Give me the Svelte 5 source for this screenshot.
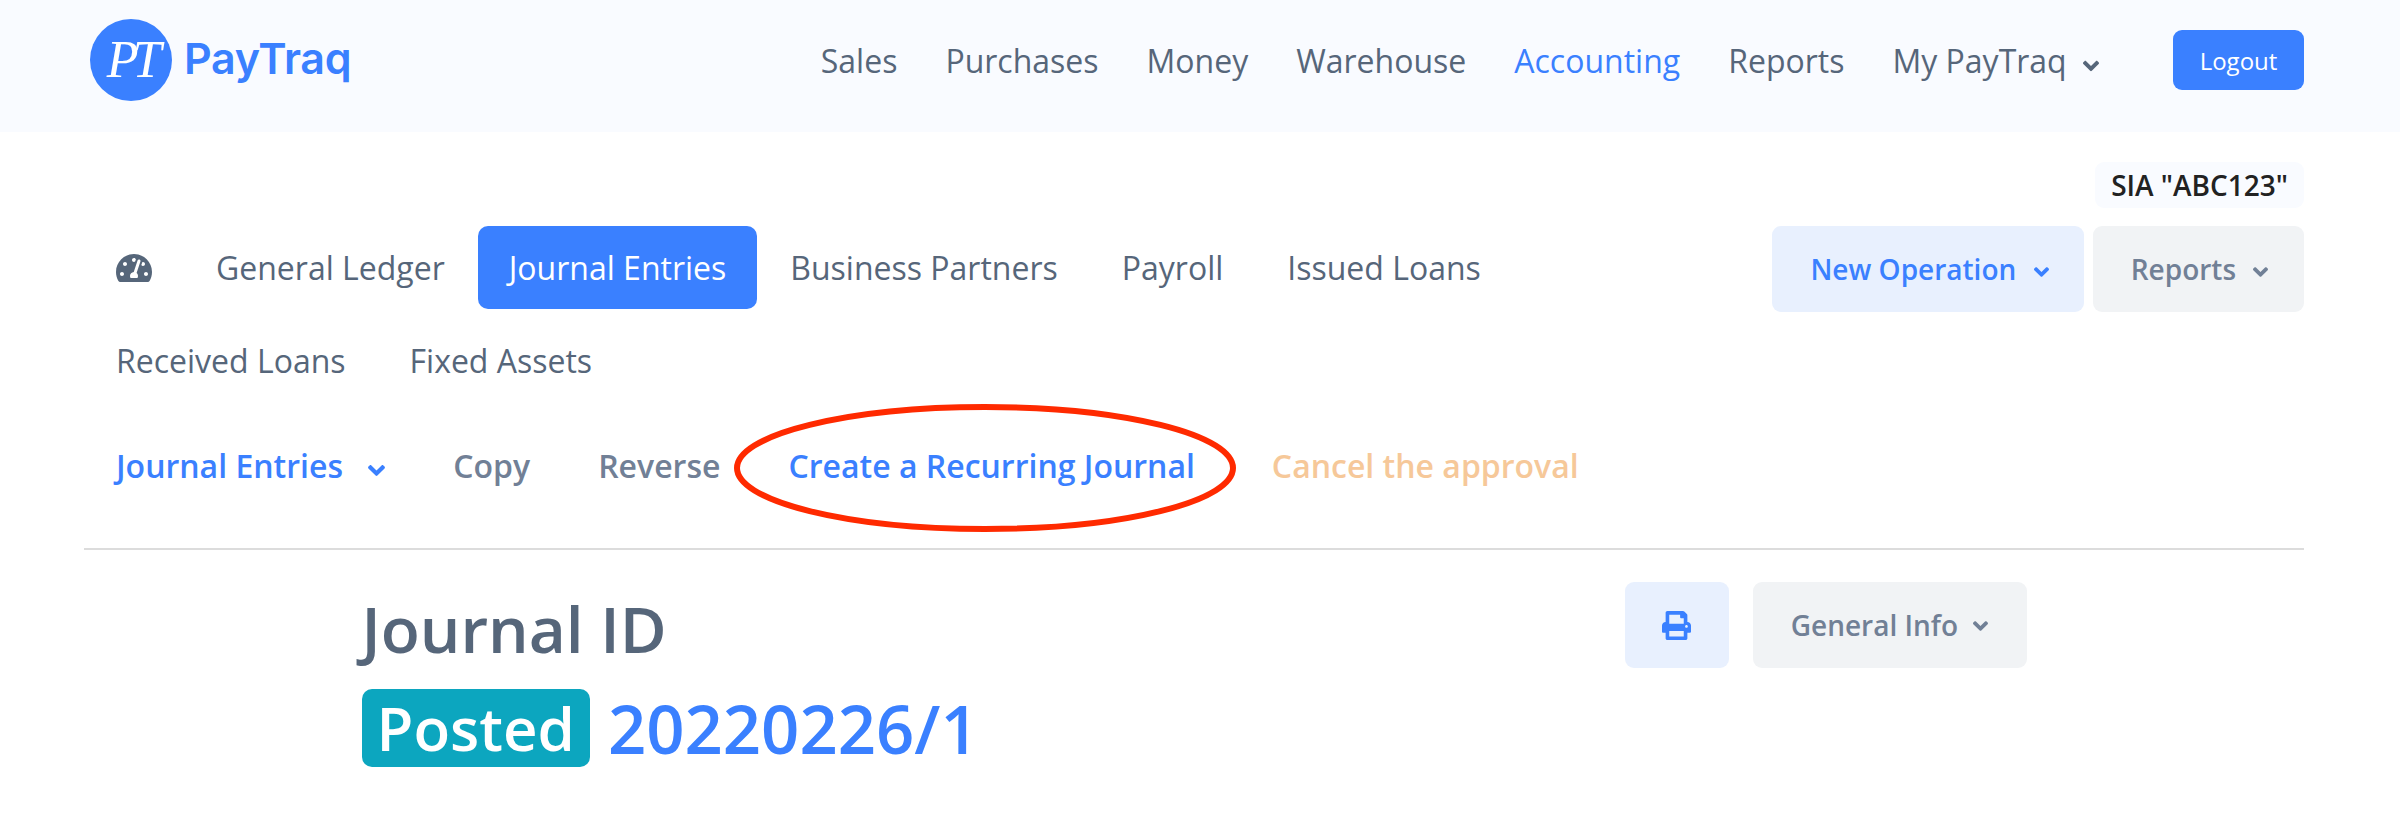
<script>
	const topNav = ['Sales', 'Purchases', 'Money', 'Warehouse', 'Accounting', 'Reports'];
	const tabs = ['General Ledger', 'Journal Entries', 'Business Partners', 'Payroll', 'Issued Loans', 'Received Loans', 'Fixed Assets'];
	const chevron = 'M143 352.3L7 216.3c-9.4-9.4-9.4-24.6 0-33.9l22.6-22.6c9.4-9.4 24.6-9.4 33.9 0l96.4 96.4 96.4-96.4c9.4-9.4 24.6-9.4 33.9 0l22.6 22.6c9.4 9.4 9.4 24.6 0 33.9l-136 136c-9.2 9.4-24.4 9.4-33.8 0z';
</script>

{#snippet caret()}
	<svg class="caret" viewBox="0 0 320 512" aria-hidden="true"><path d={chevron} /></svg>
{/snippet}

<header class="topbar">
	<a class="brand" href="/">
		<span class="brand-mark">PT</span>
		<span class="brand-name">PayTraq</span>
	</a>
	<nav class="topnav">
		{#each topNav as item}
			<a href="/" class:current={item === 'Accounting'}>{item}</a>
		{/each}
		<a href="/" class="mine">My PayTraq {@render caret()}</a>
		<button class="logout">Logout</button>
	</nav>
</header>

<main class="page">
	<div class="company-row">
		<span class="company">SIA "ABC123"</span>
	</div>

	<div class="tab-row">
		<nav class="tabs">
			<a href="/" class="tab">
				<svg class="gauge" viewBox="0 0 576 512" aria-hidden="true"><path d="M288 32C128.94 32 0 160.94 0 320c0 52.8 14.25 102.26 39.06 144.8 5.61 9.62 16.3 15.2 27.44 15.2h443c11.14 0 21.83-5.58 27.44-15.2C561.75 422.26 576 372.8 576 320c0-159.06-128.94-288-288-288zm0 64c14.71 0 26.58 10.13 30.32 23.65-1.11 2.26-2.64 4.23-3.45 6.67l-9.22 27.67c-5.13 3.49-10.97 6.01-17.64 6.01-17.67 0-32-14.33-32-32S270.33 96 288 96zM96 384c-17.67 0-32-14.33-32-32s14.33-32 32-32 32 14.33 32 32-14.33 32-32 32zm48-160c-17.67 0-32-14.33-32-32s14.33-32 32-32 32 14.33 32 32-14.33 32-32 32zm246.77-72.41l-61.33 184C343.13 347.33 352 364.54 352 384c0 11.72-3.38 22.55-8.88 32H232.88c-5.5-9.45-8.88-20.28-8.88-32 0-33.94 26.5-61.43 59.9-63.59l61.34-184.01c4.17-12.56 17.73-19.45 30.36-15.17 12.57 4.19 19.35 17.79 15.17 30.36zm14.66 57.2l15.52-46.55c3.47-1.29 7.13-2.23 11.05-2.23 17.67 0 32 14.33 32 32s-14.33 32-32 32c-11.38-.01-20.89-6.28-26.57-15.22zM480 384c-17.67 0-32-14.33-32-32s14.33-32 32-32 32 14.33 32 32-14.33 32-32 32z" /></svg>
			</a>
			{#each tabs as tab}
				<a href="/" class="tab" class:active={tab === 'Journal Entries'}>{tab}</a>
			{/each}
		</nav>
		<div class="actions">
			<button class="btn primary-light">New Operation {@render caret()}</button>
			<button class="btn grey">Reports {@render caret()}</button>
		</div>
	</div>

	<nav class="subnav">
		<a href="/" class="blue first">Journal Entries {@render caret()}</a>
		<a href="/" class="slate">Copy</a>
		<a href="/" class="slate">Reverse</a>
		<a href="/" class="blue">Create a Recurring Journal</a>
		<a href="/" class="peach">Cancel the approval</a>
		<svg class="annotation" viewBox="0 0 502 128" aria-hidden="true">
			<ellipse cx="251" cy="64" rx="248" ry="61" />
		</svg>
	</nav>

	<section class="doc">
		<div class="doc-head">
			<div>
				<h1>Journal ID</h1>
				<div class="doc-id">
					<span class="status">Posted</span>
					<span class="number">20220226/1</span>
				</div>
			</div>
			<div class="doc-actions">
				<button class="btn primary-light print" aria-label="Print">
					<svg viewBox="0 0 512 512" aria-hidden="true"><path d="M448 192V77.25c0-8.49-3.37-16.62-9.37-22.63L393.37 9.37c-6-6-14.14-9.37-22.63-9.37H96C78.33 0 64 14.33 64 32v160c-35.35 0-64 28.65-64 64v112c0 8.84 7.16 16 16 16h48v96c0 17.67 14.33 32 32 32h320c17.67 0 32-14.33 32-32v-96h48c8.84 0 16-7.16 16-16V256c0-35.35-28.65-64-64-64zm-64 256H128v-96h256v96zm0-224H128V64h192v48c0 8.84 7.16 16 16 16h48v96zm48 72c-13.25 0-24-10.75-24-24 0-13.26 10.75-24 24-24s24 10.74 24 24c0 13.25-10.75 24-24 24z" /></svg>
				</button>
				<button class="btn grey info">General Info {@render caret()}</button>
			</div>
		</div>
	</section>
</main>

<style>
	:global(body) {
		margin: 0;
		background: #fff;
		font-family: 'Open Sans', sans-serif;
	}

	a {
		text-decoration: none;
		color: inherit;
	}

	button {
		font-family: inherit;
		border: none;
		cursor: pointer;
	}

	.caret {
		width: 15px;
		height: 24px;
		fill: currentColor;
		vertical-align: -4px;
		margin-left: 10px;
	}

	.topbar {
		display: flex;
		justify-content: space-between;
		align-items: center;
		height: 132px;
		padding: 0 96px 0 90px;
		background: #f9fbff;
	}

	.brand {
		display: flex;
		align-items: center;
		gap: 12px;
		margin-top: -13px;
	}

	.brand-mark {
		display: flex;
		align-items: center;
		justify-content: center;
		width: 82px;
		height: 82px;
		border-radius: 50%;
		background: #3a80ff;
		color: #fff;
		font-family: 'Liberation Serif', serif;
		font-style: italic;
		font-size: 52px;
		letter-spacing: -6px;
	}

	.brand-name {
		font-family: Inter, sans-serif;
		font-weight: 600;
		font-size: 43px;
		letter-spacing: -0.3px;
		color: #3a80ff;
		margin-top: -3px;
	}

	.topnav {
		display: flex;
		align-items: center;
		gap: 48px;
		font-size: 32px;
		color: #56667a;
		margin-bottom: 12px;
	}

	.topnav .current {
		color: #3a80ff;
	}

	.topnav .mine .caret {
		width: 16px;
		height: 26px;
		margin-left: 8px;
		vertical-align: -6px;
	}

	.logout {
		height: 60px;
		width: 131px;
		margin-left: 26px;
		border-radius: 9px;
		background: #3a80ff;
		color: #fff;
		font-size: 24px;
	}

	.page {
		padding: 30px 96px 0 84px;
	}

	.company-row {
		display: flex;
		justify-content: flex-end;
		height: 46px;
		margin-bottom: 18px;
	}

	.company {
		display: flex;
		align-items: center;
		padding: 0 16px;
		border-radius: 9px;
		background: #f9fbff;
		color: #222;
		font-size: 28px;
		font-weight: 600;
	}

	.tab-row {
		display: flex;
		justify-content: space-between;
		align-items: flex-start;
	}

	.tabs {
		display: flex;
		flex-wrap: wrap;
		gap: 10px 2px;
		flex: 1;
		margin-left: 1px;
		font-size: 32px;
		color: #56667a;
	}

	.tab {
		display: flex;
		align-items: center;
		height: 83px;
		padding: 0 31px;
		border-radius: 10px;
	}

	.tab.active {
		background: #3a80ff;
		color: #fff;
	}

	.gauge {
		width: 36px;
		height: 32px;
		fill: #56667a;
	}

	.actions {
		display: flex;
		gap: 9px;
	}

	.btn {
		height: 86px;
		border-radius: 9px;
		font-size: 28px;
		font-weight: 600;
	}

	.primary-light {
		background: #e8f0fe;
		color: #3a80ff;
	}

	.grey {
		background: #f1f3f5;
		color: #718096;
	}

	.actions .primary-light {
		width: 312px;
		padding-left: 9px;
	}

	.actions .grey {
		width: 211px;
		padding-left: 8px;
	}

	.subnav {
		position: relative;
		display: flex;
		align-items: center;
		gap: 68px;
		height: 100px;
		margin-top: 13px;
		padding: 0 0 0 32px;
		font-size: 32px;
		font-weight: 600;
	}

	.first .caret {
		width: 17px;
		height: 27px;
		margin-left: 17px;
		vertical-align: -6px;
	}

	.blue {
		color: #3a80ff;
	}

	.slate {
		color: #718096;
	}

	.peach {
		color: #f6c899;
		margin-left: 9px;
	}

	.annotation {
		position: absolute;
		left: 650px;
		top: -11px;
		width: 502px;
		height: 128px;
		fill: none;
		stroke: #ff2a00;
		stroke-width: 6;
	}

	.doc {
		margin-top: 33px;
		padding-top: 32px;
		border-top: 2px solid #dcdcdc;
	}

	.doc-head {
		display: flex;
		justify-content: space-between;
		width: 1665px;
		margin: 0 auto;
	}

	h1 {
		margin: 2px 0 0;
		font-size: 64px;
		line-height: 90px;
		font-weight: 600;
		color: #56667a;
	}

	.doc-id {
		display: flex;
		align-items: center;
		gap: 18px;
		margin-top: 15px;
		line-height: 78px;
	}

	.status {
		padding: 0 15px;
		border-radius: 10px;
		background: #0ca6bf;
		color: #fff;
		font-size: 60px;
		font-weight: 600;
	}

	.number {
		color: #3a80ff;
		font-size: 67px;
		font-weight: 600;
	}

	.doc-actions {
		display: flex;
		gap: 24px;
	}

	.print {
		width: 104px;
		display: flex;
		align-items: center;
		justify-content: center;
	}

	.print svg {
		width: 29px;
		height: 29px;
		fill: currentColor;
	}

	.info {
		width: 274px;
	}

	.info .caret {
		margin-left: 8px;
		vertical-align: -2px;
	}
</style>
